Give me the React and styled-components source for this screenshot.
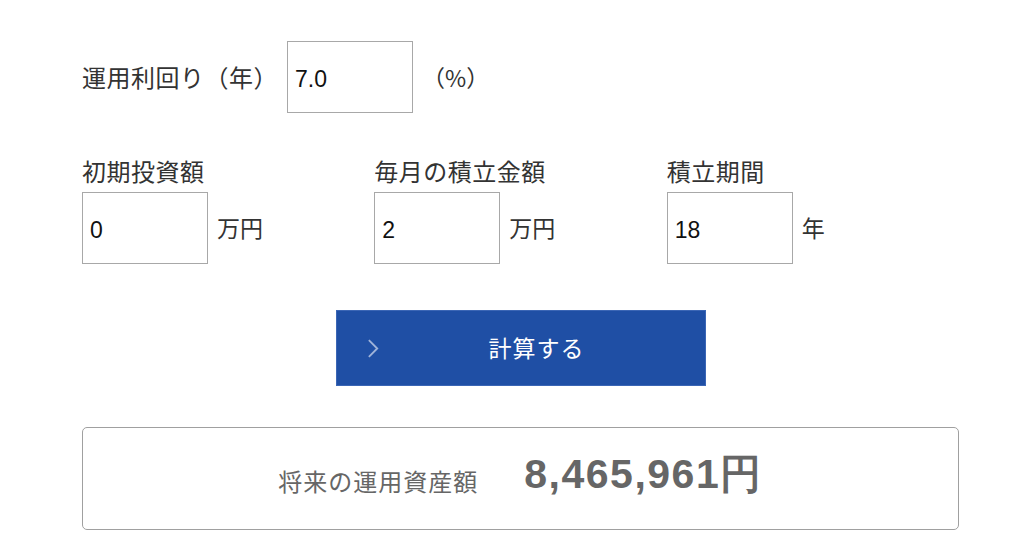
import React from 'react';
import styled, { createGlobalStyle } from 'styled-components';

const GlobalStyle = createGlobalStyle`
  body {
    margin: 0;
    background: #fff;
    font-family: "Noto Sans CJK JP", "Noto Sans", sans-serif;
    color: #333;
  }
`;

export default function App() {
  return (
    <>
      <GlobalStyle />
      <Page>
        <RateRow>
          <Label>運用利回り（年）</Label>
          <Input defaultValue='7.0' />
          <Unit>（%）</Unit>
        </RateRow>

        <Fields>
          <Field>
            <Label>初期投資額</Label>
            <InputRow>
              <Input defaultValue='0' />
              <Unit>万円</Unit>
            </InputRow>
          </Field>
          <Field>
            <Label>毎月の積立金額</Label>
            <InputRow>
              <Input defaultValue='2' />
              <Unit>万円</Unit>
            </InputRow>
          </Field>
          <Field>
            <Label>積立期間</Label>
            <InputRow>
              <Input defaultValue='18' />
              <Unit>年</Unit>
            </InputRow>
          </Field>
        </Fields>

        <ButtonWrap>
          <CalcButton type='button'>
            <Chevron viewBox='0 0 14 22'>
              <path d='M2 2 L11 11 L2 20' fill='none' stroke='currentColor' strokeWidth='2' />
            </Chevron>
            計算する
          </CalcButton>
        </ButtonWrap>

        <Result>
          <ResultLabel>将来の運用資産額</ResultLabel>
          <ResultValue>8,465,961円</ResultValue>
        </Result>
      </Page>
    </>
  );
}

const Page = styled.div`
  width: 877px;
  padding: 41px 0 0 82px;
`;

const RateRow = styled.div`
  display: flex;
  align-items: center;
  gap: 9px;
`;

const Label = styled.div`
  font-size: 24px;
  line-height: 32px;
  color: #333;
  letter-spacing: 0.5px;
`;

const Unit = styled.div`
  font-size: 23px;
  color: #333;
`;

const Input = styled.input`
  box-sizing: border-box;
  width: 126px;
  height: 72px;
  border: 1.5px solid #a8a8a8;
  border-radius: 0;
  padding: 4px 7px 0;
  font-family: "Liberation Sans", sans-serif;
  font-size: 23px;
  color: #111;
  background: #fff;
  outline: none;
`;

const Fields = styled.div`
  display: flex;
  margin-top: 42px;
`;

const Field = styled.div`
  width: 293px;
  display: flex;
  flex-direction: column;
  gap: 5px;
`;

const InputRow = styled.div`
  display: flex;
  align-items: center;
  gap: 9px;
  & > ${Unit} {
    margin-top: -3px;
  }
`;

const ButtonWrap = styled.div`
  display: flex;
  justify-content: center;
  margin-top: 46px;
`;

const CalcButton = styled.button`
  position: relative;
  width: 370px;
  height: 76px;
  border: 1px solid #3b66b5;
  background: #1f4fa5;
  color: #fff;
  font-family: "Noto Sans CJK JP", sans-serif;
  font-size: 23px;
  letter-spacing: 1px;
  padding: 0 0 2px 32px;
  cursor: pointer;
`;

const Chevron = styled.svg`
  position: absolute;
  left: 30px;
  top: 27px;
  width: 13px;
  height: 21px;
  color: #9fb3d9;
`;

const Result = styled.div`
  box-sizing: border-box;
  margin-top: 41px;
  height: 103px;
  border: 1.5px solid #a0a0a0;
  border-radius: 5px;
  display: flex;
  align-items: center;
  justify-content: center;
  gap: 46px;
  padding-bottom: 8px;
  color: #666;
`;

const ResultLabel = styled.div`
  font-size: 24px;
  letter-spacing: 1px;
  margin-top: 12px;
`;

const ResultValue = styled.div`
  font-family: "Liberation Sans", sans-serif;
  font-weight: bold;
  font-size: 41px;
  letter-spacing: 1.5px;
`;
